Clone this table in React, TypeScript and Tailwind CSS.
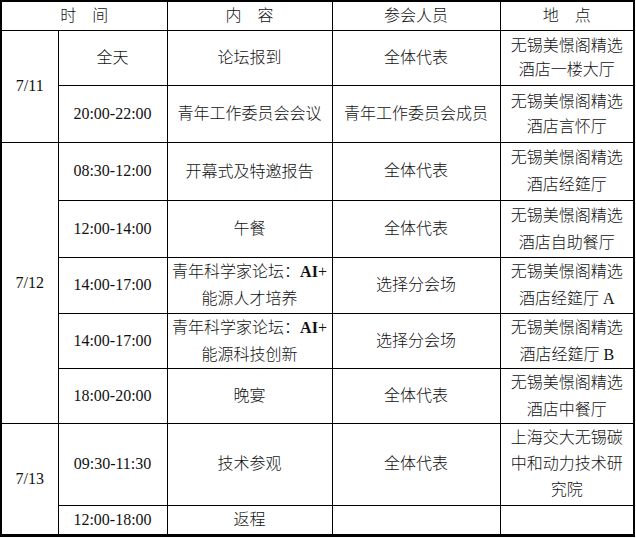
type Row = {
  date?: { text: string; span: number };
  time: string;
  content: React.ReactNode;
  people: string;
  place: React.ReactNode;
  h: string;
  lead: string;
};

const rows: Row[] = [
  {
    date: { text: '7/11', span: 2 },
    time: '全天',
    content: '论坛报到',
    people: '全体代表',
    place: <>无锡美憬阁精选<br />酒店一楼大厅</>,
    h: 'h-[55px]',
    lead: 'leading-[24px]',
  },
  {
    time: '20:00-22:00',
    content: '青年工作委员会会议',
    people: '青年工作委员会成员',
    place: <>无锡美憬阁精选<br />酒店言怀厅</>,
    h: 'h-[57px]',
    lead: 'leading-[25px]',
  },
  {
    date: { text: '7/12', span: 5 },
    time: '08:30-12:00',
    content: '开幕式及特邀报告',
    people: '全体代表',
    place: <>无锡美憬阁精选<br />酒店经筵厅</>,
    h: 'h-[58px]',
    lead: 'leading-[27px]',
  },
  {
    time: '12:00-14:00',
    content: '午餐',
    people: '全体代表',
    place: <>无锡美憬阁精选<br />酒店自助餐厅</>,
    h: 'h-[57px]',
    lead: 'leading-[27px]',
  },
  {
    time: '14:00-17:00',
    content: <>青年科学家论坛：<b className="font-bold">AI</b>+<br />能源人才培养</>,
    people: '选择分会场',
    place: <>无锡美憬阁精选<br />酒店经筵厅 A</>,
    h: 'h-[56px]',
    lead: 'leading-[27px]',
  },
  {
    time: '14:00-17:00',
    content: <>青年科学家论坛：<b className="font-bold">AI</b>+<br />能源科技创新</>,
    people: '选择分会场',
    place: <>无锡美憬阁精选<br />酒店经筵厅 B</>,
    h: 'h-[55px]',
    lead: 'leading-[27px]',
  },
  {
    time: '18:00-20:00',
    content: '晚宴',
    people: '全体代表',
    place: <>无锡美憬阁精选<br />酒店中餐厅</>,
    h: 'h-[55px]',
    lead: 'leading-[27px]',
  },
  {
    date: { text: '7/13', span: 2 },
    time: '09:30-11:30',
    content: '技术参观',
    people: '全体代表',
    place: <>上海交大无锡碳<br />中和动力技术研<br />究院</>,
    h: 'h-[82px]',
    lead: 'leading-[26px]',
  },
  {
    time: '12:00-18:00',
    content: '返程',
    people: '',
    place: '',
    h: 'h-[30px]',
    lead: 'leading-[24px]',
  },
];

const cell = 'border border-black text-center align-middle p-0 whitespace-nowrap';

export default function App() {
  return (
    <div className="w-[636px] h-[538px] bg-white text-[#111] text-[16px] font-light font-['Liberation_Serif','Noto_Sans_CJK_SC',serif]">
      <table className="table-fixed border-collapse border-2 border-b-[3px] border-black w-[635px]">
        <colgroup>
          <col className="w-[57px]" />
          <col className="w-[109px]" />
          <col className="w-[165px]" />
          <col className="w-[168px]" />
          <col className="w-[134px]" />
        </colgroup>
        <thead>
          <tr className="h-[29px]">
            <th colSpan={2} className={`${cell} font-light`}>时　间</th>
            <th className={`${cell} font-light`}>内　容</th>
            <th className={`${cell} font-light`}>参会人员</th>
            <th className={`${cell} font-light`}>地　点</th>
          </tr>
        </thead>
        <tbody>
          {rows.map((r, i) => (
            <tr key={i} className={r.h}>
              {r.date && (
                <td rowSpan={r.date.span} className={cell}>
                  {r.date.text}
                </td>
              )}
              <td className={cell}>{r.time}</td>
              <td className={`${cell} ${r.lead}`}>{r.content}</td>
              <td className={cell}>{r.people}</td>
              <td className={`${cell} ${r.lead}`}>{r.place}</td>
            </tr>
          ))}
        </tbody>
      </table>
    </div>
  );
}
